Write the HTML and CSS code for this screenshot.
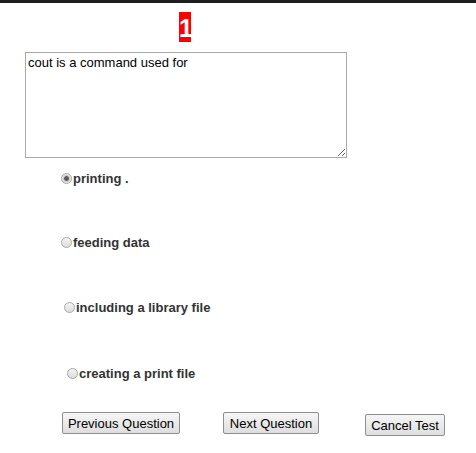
FILE: index.html
```html
<!DOCTYPE html>
<html lang="en">
<head>
    <meta charset="UTF-8">
    <meta name="viewport" content="width=device-width, initial-scale=1.0">
    <title>Test</title>
    <link rel="stylesheet" href="styles.css">
</head>
<body>
    <div class="test-container">
        <div class="question-no">
            <span class="badge">1</span>
        </div>
        <textarea class="question-text" readonly>cout is a command used for</textarea>
        <form id="answer-form" class="options">
            <label class="option"><input type="radio" name="answer" value="1" checked>printing .</label>
            <label class="option"><input type="radio" name="answer" value="2">feeding data</label>
            <label class="option"><input type="radio" name="answer" value="3">including a library file</label>
            <label class="option"><input type="radio" name="answer" value="4">creating a print file</label>
        </form>
        <div class="actions">
            <button type="button" class="prev-btn">Previous Question</button>
            <button type="button" class="next-btn">Next Question</button>
            <button type="button" class="cancel-btn">Cancel Test</button>
        </div>
    </div>
</body>
</html>
```

FILE: styles.css
```css
body {
    margin: 0;
    border-top: 3px solid #1e1e1e;
    background-color: #ffffff;
    font-family: "Liberation Sans", Arial, sans-serif;
}

.question-no {
    padding: 9px 0 0 179px;
    height: 30px;
}

.badge {
    display: inline-block;
    width: 12px;
    height: 30px;
    background-color: #ff0000;
    color: #ffffff;
    font-size: 25px;
    font-weight: bold;
    line-height: 32px;
    text-align: center;
}

.question-text {
    display: block;
    box-sizing: border-box;
    margin: 10px 0 0 25px;
    width: 322px;
    height: 106px;
    padding: 2px;
    border: 1px solid #a9a9a9;
    font-family: "Liberation Sans", Arial, sans-serif;
    font-size: 13px;
    line-height: 15px;
    color: #000000;
    outline: none;
}

.options {
    margin: 10px 0 0 0;
}

.option {
    display: flex;
    align-items: center;
    height: 20px;
    margin-bottom: 44px;
    font-size: 13px;
    font-weight: bold;
    color: #333333;
}

.option:nth-child(1) { padding-left: 61px; }
.option:nth-child(2) { padding-left: 61px; margin-bottom: 45px; }
.option:nth-child(3) { padding-left: 64px; margin-bottom: 46px; }
.option:nth-child(4) { padding-left: 67px; margin-bottom: 0; }

.option input {
    appearance: none;
    -webkit-appearance: none;
    box-sizing: border-box;
    width: 11px;
    height: 11px;
    margin: 0 1px 0 0;
    border: 1px solid #a8a8a8;
    border-radius: 50%;
    background: linear-gradient(#f4f4f4, #dcdcdc);
}

.option input:checked {
    background: radial-gradient(circle, #5a5a5a 0, #5a5a5a 2px, #bdbdbd 2.6px, #e6e6e6 4px);
}

.actions {
    display: flex;
    align-items: flex-start;
    margin-top: 29px;
}

button {
    height: 22px;
    padding: 0 4px;
    border: 1px solid #8e8e8e;
    border-radius: 2px;
    background: linear-gradient(#f6f6f6, #dedede);
    color: #000000;
    font-family: "Liberation Sans", Arial, sans-serif;
    font-size: 13px;
    white-space: nowrap;
}

.prev-btn {
    margin-left: 62px;
    width: 118px;
}

.next-btn {
    margin-left: 43px;
    width: 96px;
}

.cancel-btn {
    margin-left: 46px;
    margin-top: 2px;
    width: 80px;
}

button:hover {
    background: linear-gradient(#f8fbfe, #dcecfc);
}
```
